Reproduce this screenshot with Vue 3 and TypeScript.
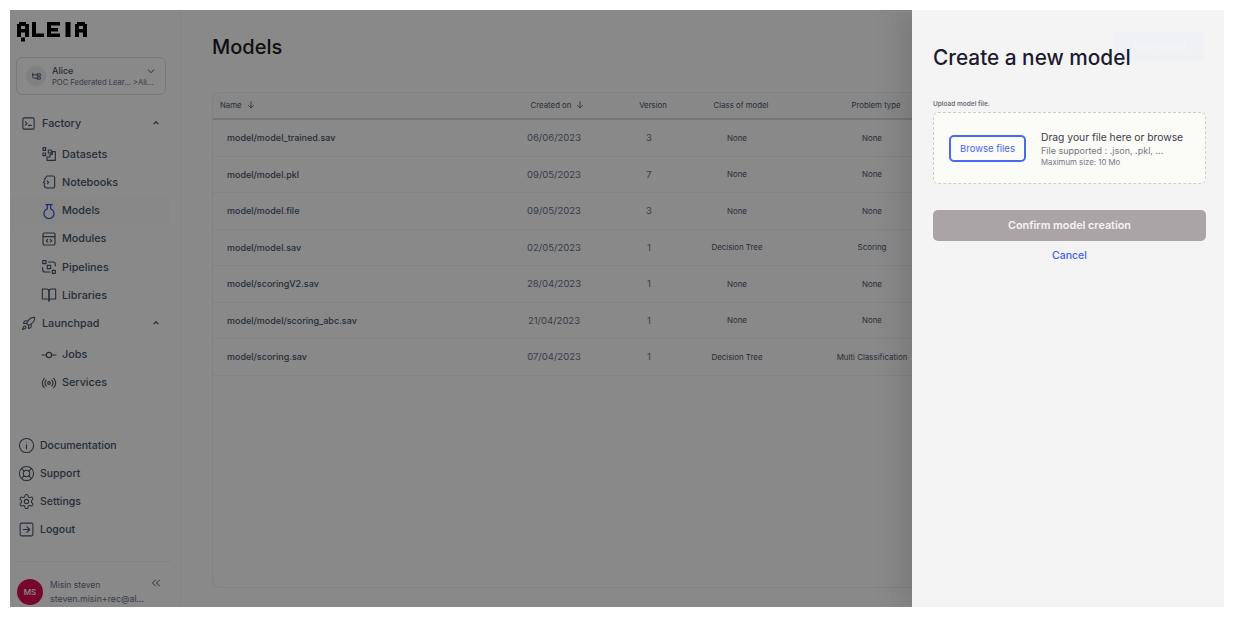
<script setup lang="ts">
const circle = (cx: number, cy: number, r: number) =>
  `M${cx - r} ${cy}a${r} ${r} 0 1 0 ${2 * r} 0a${r} ${r} 0 1 0 ${-2 * r} 0`
const box = 'M5 3h14a2 2 0 0 1 2 2v14a2 2 0 0 1-2 2H5a2 2 0 0 1-2-2V5a2 2 0 0 1 2-2z'

const icons: Record<string, string[]> = {
  terminal: [box, 'M7 9.500l2.500 2.500L7 14.500', 'M12 15h4.500'],
  datasets: ['M3 2.500h4v4H3z', 'M3 10.500h4v4H3z', 'M11 6h4.500v4.500H11z', 'M9 21.500v-5h4.500v-4h3.500V8.500h4.500v13z'],
  notebook: ['M5 8.500 9 3h9a2.500 2.500 0 0 1 2.500 2.500v13a2.500 2.500 0 0 1-2.500 2.500H9a4 4 0 0 1-4-4v-1', 'M5.500 10.500 3.500 12.500l2 2', 'M9.500 10.500l2 2-2 2'],
  flask: ['M7.500 2.500h9', 'M9.500 2.500v6.300a7.500 7.500 0 1 0 5 0V2.500'],
  module: [box, 'M3 8.500h18', 'M10 12.500l-2 2 2 2', 'M14 12.500l2 2-2 2'],
  pipeline: ['M2.500 2.500h5v4.500h-5z', 'M17 17h4.500v4.500H17z', 'M9.500 9.500h5v5h-5z', 'M11 4.500h7a3.500 3.500 0 0 1 3.500 3.500v2.500', 'M13.500 19.500H6A3.500 3.500 0 0 1 2.500 16v-3'],
  book: ['M2 3h6a4 4 0 0 1 4 4v14a3 3 0 0 0-3-3H2z', 'M22 3h-6a4 4 0 0 0-4 4v14a3 3 0 0 1 3-3h7z'],
  rocket: ['M4.500 16.500c-1.500 1.260-2 5-2 5s3.740-.5 5-2c.71-.84.7-2.130-.09-2.910a2.180 2.180 0 0 0-2.910-.09z', 'm12 15-3-3a22 22 0 0 1 2-3.950A12.880 12.880 0 0 1 22 2c0 2.720-.78 7.500-6 11a22.350 22.350 0 0 1-4 2z', 'M9 12H4s.55-3.030 2-4c1.620-1.080 5 0 5 0', 'M12 15v5s3.030-.55 4-2c1.080-1.620 0-5 0-5'],
  commit: [circle(12, 12, 4), 'M1.500 12H8', 'M16 12h6.500'],
  radio: [circle(12, 12, 2), 'M16.240 7.760a6 6 0 0 1 0 8.490', 'M19.070 4.930a10 10 0 0 1 0 14.140', 'M7.760 16.240a6 6 0 0 1 0-8.490', 'M4.930 19.070a10 10 0 0 1 0-14.140'],
  info: [circle(12, 12, 10), 'M12 16.500V11', 'M12 7.500h.01'],
  buoy: [circle(12, 12, 10), circle(12, 12, 4.500), 'm4.930 4.930 3.900 3.900', 'm15.170 8.830 3.900-3.900', 'm15.170 15.170 3.900 3.900', 'm8.830 15.170-3.900 3.900'],
  gear: ['M12.220 2h-.44a2 2 0 0 0-2 2v.18a2 2 0 0 1-1 1.730l-.43.25a2 2 0 0 1-2 0l-.15-.08a2 2 0 0 0-2.730.73l-.22.38a2 2 0 0 0 .73 2.730l.15.1a2 2 0 0 1 1 1.720v.51a2 2 0 0 1-1 1.740l-.15.09a2 2 0 0 0-.73 2.730l.22.38a2 2 0 0 0 2.730.73l.15-.08a2 2 0 0 1 2 0l.43.25a2 2 0 0 1 1 1.730V20a2 2 0 0 0 2 2h.44a2 2 0 0 0 2-2v-.18a2 2 0 0 1 1-1.730l.43-.25a2 2 0 0 1 2 0l.15.08a2 2 0 0 0 2.730-.73l.22-.39a2 2 0 0 0-.73-2.730l-.15-.08a2 2 0 0 1-1-1.740v-.5a2 2 0 0 1 1-1.740l.15-.09a2 2 0 0 0 .73-2.730l-.22-.38a2 2 0 0 0-2.730-.73l-.15.08a2 2 0 0 1-2 0l-.43-.25a2 2 0 0 1-1-1.730V4a2 2 0 0 0-2-2z', circle(12, 12, 3)],
  logout: [box, 'M7.500 12h9', 'm12.500 8 4 4-4 4'],
  branch: ['M5 6v6.500A2.500 2.500 0 0 0 7.500 15H14', 'M5 9h9', 'M14 7h5v4h-5z', 'M14 13h5v4h-5z'],
  arrow: ['M12 4v15', 'm6 13 6 6 6-6'],
  chevronUp: ['m7 14 5-5 5 5'],
  chevronDown: ['m5 9 7 7 7-7'],
  chevronsLeft: ['m11 18-6-6 6-6', 'm19 18-6-6 6-6'],
}

const nav = [
  { label: 'Factory', icon: 'terminal', group: true },
  { label: 'Datasets', icon: 'datasets' },
  { label: 'Notebooks', icon: 'notebook' },
  { label: 'Models', icon: 'flask', active: true },
  { label: 'Modules', icon: 'module' },
  { label: 'Pipelines', icon: 'pipeline' },
  { label: 'Libraries', icon: 'book' },
  { label: 'Launchpad', icon: 'rocket', group: true },
  { label: 'Jobs', icon: 'commit' },
  { label: 'Services', icon: 'radio' },
]

const footer = [
  { label: 'Documentation', icon: 'info' },
  { label: 'Support', icon: 'buoy' },
  { label: 'Settings', icon: 'gear' },
  { label: 'Logout', icon: 'logout' },
]

const rows = [
  ['model/model_trained.sav', '06/06/2023', '3', 'None', 'None'],
  ['model/model.pkl', '09/05/2023', '7', 'None', 'None'],
  ['model/model.file', '09/05/2023', '3', 'None', 'None'],
  ['model/model.sav', '02/05/2023', '1', 'Decision Tree', 'Scoring'],
  ['model/scoringV2.sav', '28/04/2023', '1', 'None', 'None'],
  ['model/model/scoring_abc.sav', '21/04/2023', '1', 'None', 'None'],
  ['model/scoring.sav', '07/04/2023', '1', 'Decision Tree', 'Multi Classification'],
]

const logoBars = [
  [1, 4, 4, 13], [3, 2, 7, 4], [9, 4, 4, 13], [3, 9, 8, 3.500], [5, 17.500, 4, 4],
  [16, 2, 4, 15], [16, 13.500, 12, 3.500],
  [31, 2, 4, 15], [31, 2, 13, 3.500], [31, 8, 11, 3.500], [31, 13.500, 13, 3.500],
  [49.500, 2, 5, 15],
  [59, 4, 4, 13], [61, 2, 8, 4], [67, 4, 4, 13], [61, 9, 8, 3.500],
]
</script>

<template>
  <div class="page">
    <div class="frame">
      <aside class="sidebar">
        <svg class="logo" width="72" height="24" viewBox="0 0 72 24" role="img" aria-label="Aleia logo">
          <rect v-for="(b, i) in logoBars" :key="i" :x="b[0]" :y="b[1]" :width="b[2]" :height="b[3]" />
        </svg>

        <div class="switcher">
          <span class="switcher-icon">
            <svg class="ico small" viewBox="0 0 24 24"><path v-for="d in icons.branch" :key="d" :d="d" /></svg>
          </span>
          <div class="switcher-text">
            <div class="switcher-name">Alice</div>
            <div class="switcher-sub">POC Federated Lear... &gt;Ali...</div>
          </div>
          <svg class="ico chev-down" viewBox="0 0 24 24"><path v-for="d in icons.chevronDown" :key="d" :d="d" /></svg>
        </div>

        <nav class="nav">
          <div
            v-for="item in nav"
            :key="item.label"
            class="nav-row"
            :class="{ group: item.group, active: item.active }"
          >
            <svg class="ico" viewBox="0 0 24 24"><path v-for="d in icons[item.icon]" :key="d" :d="d" /></svg>
            <span class="nav-label">{{ item.label }}</span>
            <svg v-if="item.group" class="ico chev-up" viewBox="0 0 24 24"><path v-for="d in icons.chevronUp" :key="d" :d="d" /></svg>
          </div>
        </nav>

        <div class="foot-nav">
          <div v-for="item in footer" :key="item.label" class="foot-row">
            <svg class="ico" viewBox="0 0 24 24"><path v-for="d in icons[item.icon]" :key="d" :d="d" /></svg>
            <span>{{ item.label }}</span>
          </div>
        </div>

        <div class="user">
          <span class="avatar">MS</span>
          <div class="user-text">
            <div>Misin steven</div>
            <div class="user-mail">steven.misin+rec@al...</div>
          </div>
          <svg class="ico collapse" viewBox="0 0 24 24"><path v-for="d in icons.chevronsLeft" :key="d" :d="d" /></svg>
        </div>
      </aside>

      <main class="main">
        <header class="main-head">
          <h1>Models</h1>
          <button class="new-btn" type="button">New model</button>
        </header>
        <section class="table">
          <div class="row head">
            <div class="cell name">Name <svg class="ico sort" viewBox="0 0 24 24"><path v-for="d in icons.arrow" :key="d" :d="d" /></svg></div>
            <div class="cell">Created on <svg class="ico sort" viewBox="0 0 24 24"><path v-for="d in icons.arrow" :key="d" :d="d" /></svg></div>
            <div class="cell">Version</div>
            <div class="cell">Class of model</div>
            <div class="cell">Problem type</div>
          </div>
          <div v-for="r in rows" :key="r[0]" class="row body">
            <div class="cell name">{{ r[0] }}</div>
            <div class="cell date">{{ r[1] }}</div>
            <div class="cell date">{{ r[2] }}</div>
            <div class="cell tiny">{{ r[3] }}</div>
            <div class="cell tiny">{{ r[4] }}</div>
          </div>
        </section>
      </main>

      <div class="scrim">
        <section class="drawer">
          <h2>Create a new model</h2>
          <div class="upload-label">Upload model file.</div>
          <div class="dropzone">
            <button class="browse" type="button">Browse files</button>
            <div class="drop-text">
              <div class="drop-title">Drag your file here or browse</div>
              <div class="drop-sub">File supported : .json, .pkl, ...</div>
              <div class="drop-max">Maximum size: 10 Mo</div>
            </div>
          </div>
          <button class="confirm" type="button">Confirm model creation</button>
          <div class="cancel">Cancel</div>
        </section>
      </div>
    </div>
  </div>
</template>

<style>
html, body { margin: 0; background: #fff; }
</style>

<style scoped>
.page {
  padding: 10px;
  width: 1234px;
  height: 617px;
  box-sizing: border-box;
  font-family: Inter, "Liberation Sans", sans-serif;
}
.frame {
  position: relative;
  display: flex;
  width: 1214px;
  height: 597px;
  overflow: hidden;
  background: #f9f9f9;
}
.ico {
  width: 18px;
  height: 18px;
  flex: none;
  fill: none;
  stroke: #475467;
  stroke-width: 1.700;
  stroke-linecap: round;
  stroke-linejoin: round;
}
.sidebar {
  width: 171px;
  flex: none;
  box-sizing: border-box;
  border-right: 1px solid #eceff0;
  display: flex;
  flex-direction: column;
  padding: 10px 10px 0 6px;
}
.logo { flex: none; fill: #000; }
.switcher {
  margin-top: 13px;
  height: 38px;
  width: 150px;
  box-sizing: border-box;
  flex: none;
  border: 1px solid #d9dbdd;
  border-radius: 6px;
  display: flex;
  align-items: center;
  padding: 0 9px;
  gap: 6px;
}
.switcher-icon {
  width: 20px;
  height: 20px;
  border-radius: 50%;
  background: #e8e9ea;
  display: flex;
  align-items: center;
  justify-content: center;
  flex: none;
}
.ico.small { width: 13px; height: 13px; }
.switcher-text { flex: 1; min-width: 0; white-space: nowrap; }
.switcher-name { font-size: 9px; font-weight: 500; color: #475467; line-height: 12px; }
.switcher-sub { font-size: 7.600px; color: #667085; line-height: 11px; }
.chev-down { width: 10px; height: 10px; margin: -10px 0 0 -6px; stroke-width: 2.400; }
.nav { margin-top: 14px; margin-left: -6px; display: flex; flex-direction: column; }
.nav-row {
  height: 28.200px;
  display: flex;
  align-items: center;
  gap: 5px;
  padding-left: 31px;
  font-size: 10.800px;
  font-weight: 500;
  color: #475467;
  border-radius: 0 4px 4px 0;
}
.nav-row .ico { width: 16px; height: 16px; }
.nav-row.group { padding-left: 11px; gap: 6px; margin-bottom: 3px; }
.nav-row.group .ico { width: 15px; height: 15px; }
.nav-row.group .ico.chev-up { width: 10px; height: 10px; margin-left: auto; margin-right: 9px; stroke-width: 3; }
.nav-row.active { background: #f4f6f4; }
.nav-row.active .ico { stroke: #3349e0; }
.nav-label { white-space: nowrap; }
.foot-nav { margin-top: auto; display: flex; flex-direction: column; }
.foot-row {
  height: 28px;
  display: flex;
  align-items: center;
  gap: 5px;
  padding-left: 2px;
  font-size: 10.500px;
  font-weight: 500;
  color: #475467;
}
.foot-row .ico { width: 17px; height: 17px; stroke-width: 1.500; }
.user {
  margin-top: 18px;
  margin-right: -1px;
  height: 46px;
  border-top: 1px solid #eceff0;
  display: flex;
  align-items: center;
  gap: 7px;
  flex: none;
  box-sizing: border-box;
  font-size: 8.500px;
  color: #667085;
}
.avatar {
  width: 26px;
  height: 26px;
  margin: 14px 0 0 1px;
  border-radius: 50%;
  background: #d80c50;
  color: #fff;
  font-size: 8px;
  font-weight: 500;
  display: flex;
  align-items: center;
  justify-content: center;
  flex: none;
}
.user-text { margin-top: 14px; line-height: 13px; white-space: nowrap; flex: 1; }
.user-mail { font-size: 8.800px; }
.collapse { width: 12px; height: 12px; margin: -4px 9px 0 -23px; stroke-width: 2; }

.main { flex: 1; min-width: 0; padding: 0 20px 19px 31px; display: flex; flex-direction: column; }
.main-head { display: flex; align-items: center; justify-content: space-between; height: 82px; flex: none; padding-bottom: 8px; box-sizing: border-box; }
h1 { margin: 0; font-size: 20px; font-weight: 500; color: #1d1d1f; }
.new-btn {
  width: 90px;
  height: 30px;
  margin-top: -3px;
  border: 0;
  border-radius: 5px;
  background: #4060f5;
  color: #fff;
  font: 600 10px Inter, sans-serif;
  white-space: nowrap;
  padding: 0;
}
.table { flex: 1; border: 1px solid #ececec; border-radius: 8px; overflow: hidden; }
.row {
  display: grid;
  grid-template-columns: 303px 76px 114px 62px 208px 1fr;
  align-items: center;
}
.row.head {
  height: 23px;
  padding-bottom: 2px;
  border-bottom: 2px solid #d6d8d8;
  font-size: 7.800px;
  color: #475467;
  background: #f7f8f8;
}
.row.body { height: 35.500px; border-bottom: 1px solid #eeeeee; color: #475467; }
.cell { text-align: center; white-space: nowrap; display: flex; justify-content: center; align-items: center; gap: 4px; }
.row.head .cell { padding-left: 8px; }
.row.head .cell.name { padding-left: 7px; justify-content: flex-start; }
.row.body .cell.name { padding-left: 14px; justify-content: flex-start; font-size: 9px; font-weight: 500; color: #475467; }
.date { font-size: 9.500px; color: #667085; }
.tiny { font-size: 7.900px; font-weight: 400; color: #475467; }
.sort { width: 10px; height: 10px; stroke-width: 2; }

.scrim {
  position: absolute;
  inset: 0;
  background: rgba(0, 0, 0, 0.45);
  display: flex;
  justify-content: flex-end;
}
.drawer {
  width: 312px;
  box-sizing: border-box;
  padding: 0 18px 0 21px;
  background: rgba(248, 248, 249, 0.965);
  box-shadow: -14px 0 24px rgba(0, 0, 0, 0.1);
  display: flex;
  flex-direction: column;
}
h2 { margin: 35px 0 0; font-size: 20.800px; line-height: 26px; font-weight: 500; color: #1e1a2e; white-space: nowrap; }
.upload-label { margin-top: 29px; font-size: 6.500px; line-height: 8px; font-weight: 600; color: #6f6f75; }
.dropzone {
  margin-top: 4px;
  height: 72px;
  box-sizing: border-box;
  border: 1px dashed #cfcfc9;
  border-radius: 5px;
  background: #fbfbf7;
  display: flex;
  align-items: center;
  padding: 0 15px;
  gap: 15px;
}
.browse {
  width: 77px;
  height: 27px;
  margin-top: 1px;
  box-sizing: border-box;
  border: 2px solid #4a68f2;
  border-radius: 5px;
  background: transparent;
  color: #4867f2;
  font: 400 9.500px Inter, sans-serif;
  padding: 0;
}
.drop-text { white-space: nowrap; margin-top: 2px; }
.drop-title { font-size: 10.300px; line-height: 13px; color: #3d3a4a; }
.drop-sub { font-size: 9px; line-height: 13px; color: #777780; }
.drop-max { font-size: 7.800px; line-height: 11px; color: #777780; }
.confirm {
  margin-top: 26px;
  height: 31px;
  border: 0;
  border-radius: 5px;
  background: #aaa4a7;
  color: #f5f3f4;
  font: 600 10.800px Inter, sans-serif;
  padding: 0 0 1px;
}
.cancel { margin-top: 8px; text-align: center; font: 500 10.500px Inter, sans-serif; color: #3f5ef5; }
</style>
